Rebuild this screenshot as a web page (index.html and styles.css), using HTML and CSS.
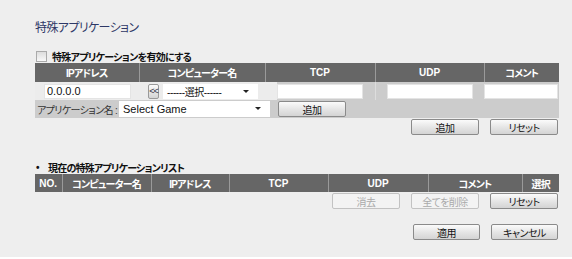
FILE: index.html
```html
<!DOCTYPE html>
<html lang="ja">
<head>
<meta charset="UTF-8" />
<title>特殊アプリケーション</title>
<link rel="stylesheet" href="styles.css">
</head>
<body>
  <div class="page">
    <h1 class="title">特殊アプリケーション</h1>

    <label class="enable">
      <span class="checkbox"></span>
      特殊アプリケーションを有効にする
    </label>

    <table class="grid entry">
      <colgroup>
        <col class="c-ip"><col class="c-comp"><col class="c-tcp"><col class="c-udp"><col class="c-comment">
      </colgroup>
      <tr class="head">
        <th class="ja">IPアドレス</th>
        <th class="ja">コンピューター名</th>
        <th>TCP</th>
        <th>UDP</th>
        <th class="ja">コメント</th>
      </tr>
      <tr class="inputs">
        <td class="c-ip"><input type="text" class="field ip" value="0.0.0.0"></td>
        <td class="c-comp">
          <button class="btn tiny">&lt;&lt;</button>
          <span class="dropdown comp-select">------選択------</span>
        </td>
        <td class="c-tcp"><input type="text" class="field port"></td>
        <td class="c-udp"><input type="text" class="field port"></td>
        <td class="c-comment"><input type="text" class="field comment"></td>
      </tr>
      <tr class="app">
        <td colspan="5">
          <div class="app-row">
            <span class="app-label">アプリケーション名 :</span>
            <span class="dropdown game-select">Select Game</span>
            <button class="btn">追加</button>
          </div>
        </td>
      </tr>
    </table>

    <div class="actions first">
      <button class="btn">追加</button>
      <button class="btn">リセット</button>
    </div>

    <h2 class="list-title"><span class="bullet">•</span><span class="list-text">現在の特殊アプリケーションリスト</span></h2>

    <table class="grid list">
      <colgroup>
        <col class="l-no"><col class="l-comp"><col class="l-ip"><col class="l-tcp"><col class="l-udp"><col class="l-comment"><col class="l-select">
      </colgroup>
      <tr class="head">
        <th>NO.</th>
        <th class="ja">コンピューター名</th>
        <th class="ja">IPアドレス</th>
        <th>TCP</th>
        <th>UDP</th>
        <th class="ja">コメント</th>
        <th class="ja">選択</th>
      </tr>
    </table>

    <div class="actions list-actions">
      <button class="btn" disabled>消去</button>
      <button class="btn" disabled>全てを削除</button>
      <button class="btn">リセット</button>
    </div>

    <div class="actions apply">
      <button class="btn">適用</button>
      <button class="btn">キャンセル</button>
    </div>
  </div>
</body>
</html>
```

FILE: styles.css
```css
html {
  background: #fff;
}
body {
  margin: 0;
  background: #eeeeee;
  height: 257px;
  font-family: "Liberation Sans", "Noto Sans CJK JP", sans-serif;
  font-size: 11px;
  color: #222;
  font-feature-settings: "palt";
}
.page {
  width: 524px;
  padding: 20px 0 0 35px;
}
.title {
  margin: 0;
  font-size: 12px;
  letter-spacing: -0.6px;
  font-weight: normal;
  color: #2e3866;
  line-height: 16px;
}
.enable {
  display: flex;
  align-items: center;
  gap: 4px;
  margin-top: 13px;
  height: 14px;
  font-size: 10px;
  letter-spacing: -0.7px;
  font-weight: bold;
  color: #111;
}
.checkbox {
  width: 9px;
  height: 9px;
  border: 1px solid #aaa;
  background: linear-gradient(#ddd, #f8f8f8);
  margin-left: 1px;
  margin-right: 1px;
}

.grid {
  width: 524px;
  border-collapse: collapse;
  table-layout: fixed;
}
.grid th {
  background: #666666;
  color: #fff;
  font-weight: bold;
  font-size: 10px;
  height: 18px;
  padding: 0;
  border-left: 1px solid #9a9a9a;
  text-align: center;
  white-space: nowrap;
  overflow: hidden;
}
.grid th.ja {
  letter-spacing: -0.8px;
}
.entry th {
  height: 19px;
  font-weight: 600;
}
.grid th:first-child {
  border-left: none;
}
.grid td {
  padding: 0;
}
col.c-ip { width: 104px; }
col.c-comp { width: 126px; }
col.c-tcp { width: 110px; }
col.c-udp { width: 109px; }
col.c-comment { width: 75px; }

.inputs td {
  height: 18px;
  background: #ececec;
  vertical-align: middle;
}
.inputs td.c-ip { padding-left: 9px; }
.inputs td.c-comp { padding-left: 9px; }
.inputs td.c-tcp {
  padding-left: 12px;
  background: linear-gradient(to right, #ececec 12px, #cccccc 12px);
}
.inputs td.c-udp {
  padding-left: 11px;
  background: #cccccc;
  border-left: 1px solid #dddddd;
}
.inputs td.c-comment {
  background: #cccccc;
}
.field {
  box-sizing: border-box;
  height: 15px;
  border: 1px solid #e4e4e4;
  background: #fff;
  padding: 0 2px;
  font-family: "Liberation Sans", sans-serif;
  font-size: 11px;
  color: #111;
  display: block;
  outline: none;
}
.ip { width: 87px; }
.port { width: 86px; }
.comment { width: 74px; }
.c-comp {
  white-space: nowrap;
}
.c-comp .btn, .c-comp .dropdown {
  vertical-align: middle;
}

.btn {
  box-sizing: border-box;
  height: 16px;
  width: 68px;
  padding: 0;
  border: 1px solid #8a8a8a;
  border-radius: 2px;
  background: linear-gradient(#fbfbfb, #e4e4e4 55%, #d4d4d4);
  font-family: "Noto Sans CJK JP", sans-serif;
  font-size: 10px;
  letter-spacing: -0.5px;
  line-height: 13px;
  color: #111;
  font-feature-settings: "palt";
}
.btn:disabled {
  border-color: #c2c2c2;
  background: #f3f3f3;
  color: #aaa;
}
.btn.tiny {
  width: 11px;
  height: 15px;
  font-family: "Liberation Sans", sans-serif;
  font-size: 9px;
  letter-spacing: -1px;
  border-color: #999;
  color: #334;
  margin-right: 1px;
}

.dropdown {
  box-sizing: border-box;
  display: inline-flex;
  align-items: center;
  position: relative;
  height: 15px;
  background: #fff;
  padding-left: 4px;
  color: #111;
  white-space: nowrap;
}
.dropdown::after {
  content: "";
  position: absolute;
  right: 9px;
  top: 6px;
  border-left: 3px solid transparent;
  border-right: 3px solid transparent;
  border-top: 3px solid #222;
}
.comp-select {
  width: 95px;
  font-size: 10px;
  letter-spacing: -0.4px;
}
.game-select { width: 151px; height: 16px; }

.app td {
  height: 18px;
  background: #cccccc;
}
.app-row {
  display: flex;
  align-items: center;
  padding-left: 2px;
}
.app-label {
  width: 82px;
  font-size: 10px;
  white-space: nowrap;
  letter-spacing: -0.6px;
  color: #333;
}
.app-row .btn {
  margin-left: 8px;
}

.actions {
  display: flex;
  justify-content: flex-end;
  gap: 11px;
  padding-right: 1px;
}
.actions.first {
  margin-top: 1px;
}
.list-title {
  margin: 26px 0 0 0;
  height: 13px;
  font-size: 10px;
  font-weight: bold;
  color: #111;
  display: flex;
  align-items: center;
}
.list-text {
  letter-spacing: -0.8px;
}
.bullet {
  width: 12px;
  padding-left: 1px;
}
col.l-no { width: 27px; }
col.l-comp { width: 89px; }
col.l-ip { width: 78px; }
col.l-tcp { width: 99px; }
col.l-udp { width: 100px; }
col.l-comment { width: 94px; }
col.l-select { width: 37px; }
.list-actions {
  margin-top: 1px;
}
.apply {
  margin-top: 15px;
}
.apply .btn {
  width: 67px;
}
```
